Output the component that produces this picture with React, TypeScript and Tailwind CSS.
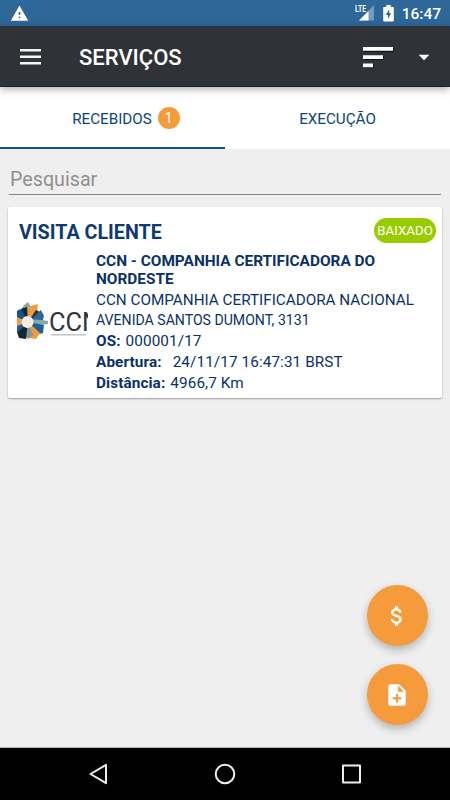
import type { ReactNode } from 'react'
import { MdArrowDropDown, MdAttachMoney, MdNoteAdd, MdWarning } from 'react-icons/md'

const details = [
  { label: 'OS:', value: '000001/17', gap: 'gap-[5px]' },
  { label: 'Abertura:', value: '24/11/17 16:47:31 BRST', gap: 'gap-[11px]' },
  { label: 'Distância:', value: '4966,7 Km', gap: 'gap-[5px]' },
]

function StatusBar() {
  return (
    <div className="flex h-[26px] shrink-0 items-center bg-[#2d6899] pl-[10px] pr-[9px] text-white">
      <MdWarning className="h-[19px] w-[19px]" />
      <svg className="ml-auto h-[18px] w-[20px]" viewBox="0 0 20 18">
        <path d="M19 1v15.500H4z" fill="#fff" opacity=".35" />
        <path d="M13.500 7v9.500H4z" fill="#fff" />
        <text x="0" y="8" fontFamily="Roboto, sans-serif" fontSize="9.500" fontWeight="700" textLength="11" lengthAdjust="spacingAndGlyphs" fill="#fff">
          LTE
        </text>
      </svg>
      <svg className="ml-[8px] h-[17px] w-[11px]" viewBox="0 0 11 17">
        <path d="M3.3 0h4.4v2H10a.8.8 0 0 1 .8.8v12.9a.8.8 0 0 1-.8.8H1a.8.8 0 0 1-.8-.8V2.800A.8.8 0 0 1 1 2h2.300z" fill="#fff" />
        <path d="M6.200 4.300 2.800 10h2.100v4L8.200 8.300H6.200z" fill="#2d6899" />
      </svg>
      <span className="ml-[8px] mt-[3px] text-[15.5px] font-medium leading-none">16:47</span>
    </div>
  )
}

function AppBar() {
  return (
    <header className="relative z-10 flex h-[61px] shrink-0 items-center border-b border-[#17232d] bg-[#2f3237] text-white shadow-[0_2px_8px_rgba(0,0,0,0.35)]">
      <svg className="ml-[20px] mt-[2px] h-[16px] w-[21px]" viewBox="0 0 21 16">
        <path d="M0 0h21v2.400H0zM0 6.500h21v2.400H0zM0 13h21v2.400H0z" fill="#f4f4f4" />
      </svg>
      <h1 className="ml-[38px] mt-[4px] text-[22px] font-medium leading-none">SERVIÇOS</h1>
      <svg className="ml-auto mt-[2px] h-[21px] w-[31px]" viewBox="0 0 31 21">
        <path d="M1 1h30v4H1zM1 9h20v4H1zM1 17h10v4H1z" fill="#000" opacity=".6" />
        <path d="M0 0h30v3.800H0zM0 8.200h20v3.800H0zM0 16.400h10v3.800H0z" fill="#fff" />
      </svg>
      <MdArrowDropDown className="ml-[17px] mr-[13px] mt-[2px] h-[26px] w-[26px]" />
    </header>
  )
}

function Tabs() {
  return (
    <nav className="grid h-[62px] shrink-0 grid-cols-2 bg-white text-[15.2px] text-[#0b4482]">
      <div className="flex items-center justify-center border-b-2 border-[#0b5295] pl-[27px] pt-[4px]">
        RECEBIDOS
        <span className="mb-[3px] ml-[6px] flex h-[22px] w-[22px] items-center justify-center rounded-full bg-[#f69b3c] pt-[1px] text-[14px] text-white">1</span>
      </div>
      <div className="flex items-center justify-center pt-[2px]">EXECUÇÃO</div>
    </nav>
  )
}

function CompanyLogo() {
  return (
    <svg className="h-[42px] w-[71px] shrink-0 overflow-hidden" viewBox="0 0 71 42">
      <path d="M11 20 2 9l7-6z" fill="#175b93" />
      <path d="M11 20 6 4l5-4 3 5z" fill="#89aaa3" />
      <path d="M11 20 4 7l6-2z" fill="#18262f" />
      <path d="M11 20 V5l3-1 7-2-1 9z" fill="#f19a3e" />
      <path d="M11 20 19 8l6 3-1 5z" fill="#22333d" />
      <path d="M11 20 24 8l3 6-2 7z" fill="#2f659d" />
      <path d="M11 17 25 18l6 1v3l-17 2z" fill="#84aaa7" />
      <path d="M11 20 27 23l-1 8-7 2z" fill="#1d629b" />
      <path d="M11 20 23 31l-4 6-7-1z" fill="#f19a3e" />
      <path d="M11 20 16 33l-5 4-5-5z" fill="#7e9998" />
      <path d="M11 20 9 37l-7-1-2-6z" fill="#132633" />
      <path d="M11 20 0 31v-8z" fill="#225c90" />
      <path d="M11 20 0 24V14z" fill="#f19a3e" />
      <path d="M11 20 0 15V9l3-2z" fill="#13558d" />
      <circle cx="10.500" cy="20" r="6" fill="#f0eee3" />
      <text x="32" y="29" fontFamily="Roboto, sans-serif" fontSize="25" textLength="51" lengthAdjust="spacingAndGlyphs" fill="#2d3740">
        CCN
      </text>
      <path d="M34 32.800h35" stroke="#c4c4c4" strokeWidth="1.500" />
    </svg>
  )
}

function ServiceCard() {
  return (
    <article className="mx-[8px] mt-[12px] flex h-[191px] flex-col rounded-[2px] bg-white text-[#0a3168] shadow-[0_1px_2px_rgba(0,0,0,0.35)]">
      <div className="flex h-[45px] shrink-0 justify-between pl-[11px] pr-[6px] pt-[11px]">
        <h2 className="pt-[2px] text-[19.7px] font-bold leading-[26px] text-[#0b3b70]">VISITA CLIENTE</h2>
        <span className="flex h-[25px] w-[62px] items-center justify-center rounded-full bg-[#99cc00] pt-[1px] text-[13.3px] text-white">BAIXADO</span>
      </div>
      <div className="flex gap-[8px] pl-[9px]">
        <div className="pt-[50px]">
          <CompanyLogo />
        </div>
        <div className="whitespace-nowrap text-[15.3px] leading-[21px]">
          <p className="text-[15.4px] font-bold leading-[18px]">
            CCN - COMPANHIA CERTIFICADORA DO
            <br />
            NORDESTE
          </p>
          <p className="mt-[2px] text-[15.25px]">CCN COMPANHIA CERTIFICADORA NACIONAL</p>
          <p className="pb-[2px] text-[14.1px] leading-[18px]">AVENIDA SANTOS DUMONT, 3131</p>
          {details.map((row) => (
            <p key={row.label} className={`flex ${row.gap}`}>
              <b className="tracking-[0.1px]">{row.label}</b>
              <span className="tracking-[0.1px]">{row.value}</span>
            </p>
          ))}
        </div>
      </div>
    </article>
  )
}

function Fab({ children }: { children: ReactNode }) {
  return (
    <button className="flex h-[61px] w-[61px] items-center justify-center rounded-full bg-[#f69b3c] pr-[1px] text-white shadow-[0_4px_8px_rgba(0,0,0,0.25)]">
      {children}
    </button>
  )
}

function NavigationBar() {
  return (
    <div className="flex h-[52px] shrink-0 items-center justify-between bg-black pl-[88px] pr-[89px]">
      <svg className="h-[22px] w-[20px]" viewBox="0 0 20 22" fill="none" stroke="#eee" strokeWidth="2" strokeLinejoin="round">
        <path d="M18 1.800v18.400L2.500 11z" />
      </svg>
      <svg className="h-[22px] w-[22px]" viewBox="0 0 22 22" fill="none" stroke="#eee" strokeWidth="2">
        <circle cx="11" cy="11" r="9.300" />
      </svg>
      <svg className="h-[22px] w-[20px]" viewBox="0 0 20 22" fill="none" stroke="#eee" strokeWidth="2" strokeLinejoin="round">
        <rect x="2" y="2.500" width="17" height="17" />
      </svg>
    </div>
  )
}

export default function App() {
  return (
    <div className="flex h-[800px] w-[450px] flex-col overflow-hidden bg-[#efefef] font-['Roboto',sans-serif]">
      <StatusBar />
      <AppBar />
      <Tabs />
      <main className="relative flex-1 border-b border-[#b5b5b5]">
        <div className="mx-[9px] flex h-[46px] items-center border-b border-[#858585] pt-[15px]">
          <input placeholder="Pesquisar" className="w-full pl-px text-[19.7px] leading-none outline-none placeholder:text-[#8f8f8f]" />
        </div>
        <ServiceCard />
        <div className="absolute bottom-[22px] right-[22px] flex flex-col gap-[18px]">
          <Fab>
            <MdAttachMoney className="h-[26px] w-[26px]" />
          </Fab>
          <Fab>
            <MdNoteAdd className="h-[26px] w-[26px]" />
          </Fab>
        </div>
      </main>
      <NavigationBar />
    </div>
  )
}
